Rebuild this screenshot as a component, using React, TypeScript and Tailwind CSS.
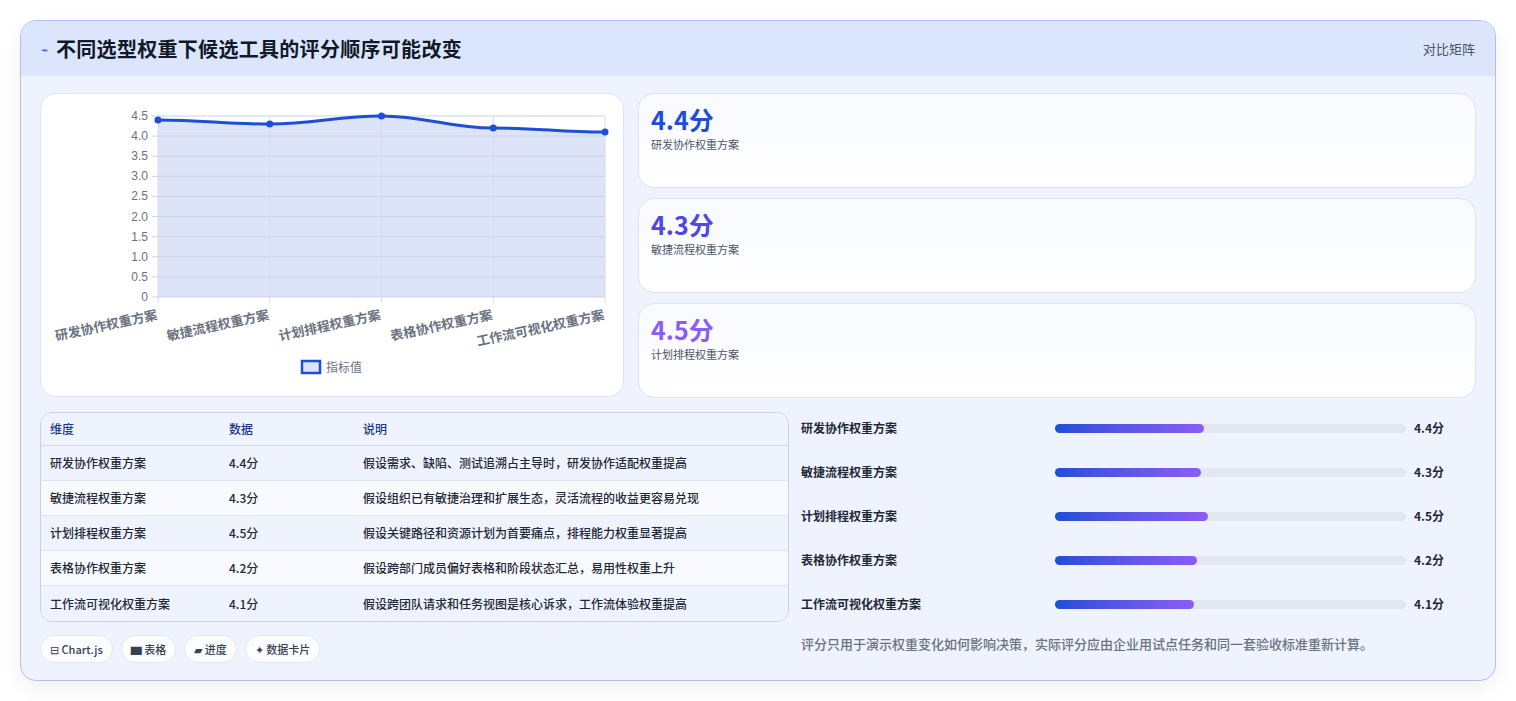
import React from "react";

const rows = [
  { name: "研发协作权重方案", v: 4.4, note: "假设需求、缺陷、测试追溯占主导时，研发协作适配权重提高" },
  { name: "敏捷流程权重方案", v: 4.3, note: "假设组织已有敏捷治理和扩展生态，灵活流程的收益更容易兑现" },
  { name: "计划排程权重方案", v: 4.5, note: "假设关键路径和资源计划为首要痛点，排程能力权重显著提高" },
  { name: "表格协作权重方案", v: 4.2, note: "假设跨部门成员偏好表格和阶段状态汇总，易用性权重上升" },
  { name: "工作流可视化权重方案", v: 4.1, note: "假设跨团队请求和任务视图是核心诉求，工作流体验权重提高" },
];

function Chart() {
  const x0 = 117, x1 = 564, yTop = 22, yBot = 203;
  const xs = rows.map((_, i) => x0 + ((x1 - x0) * i) / 4);
  const y = (v: number) => yBot - ((yBot - yTop) * v) / 4.5;
  const pts = rows.map((r, i) => [xs[i], y(r.v)] as const);
  let d = `M${pts[0][0]},${pts[0][1]}`;
  for (let i = 1; i < pts.length; i++) {
    const [px, py] = pts[i - 1];
    const [cx, cy] = pts[i];
    const dx = (cx - px) * 0.4;
    d += ` C${px + dx},${py} ${cx - dx},${cy} ${cx},${cy}`;
  }
  const ticks = [0, 0.5, 1, 1.5, 2, 2.5, 3, 3.5, 4, 4.5];
  return (
    <svg width="583" height="303" className="block" style={{ fontFamily: "'Liberation Sans', 'Noto Sans CJK SC', sans-serif" }}>
      <path d={`${d} L${x1},${yBot} L${x0},${yBot} Z`} fill="#dde4f7" />
      {ticks.map((t) => (
        <g key={t}>
          <line x1={x0 - 6} x2={x1} y1={y(t)} y2={y(t)} stroke="#c9d3ea" strokeWidth="1" />
          <text x={x0 - 10} y={y(t) + 4} textAnchor="end" fontSize="12" fill="#6b7280">{t === 0 ? "0" : t.toFixed(1)}</text>
        </g>
      ))}
      {xs.map((x) => (
        <line key={x} x1={x} x2={x} y1={yTop} y2={yBot + 6} stroke="#d4dcee" strokeWidth="1" />
      ))}
      <path d={d} fill="none" stroke="#1d4ed8" strokeWidth="3" />
      {pts.map(([px, py], i) => (
        <circle key={i} cx={px} cy={py} r="3.5" fill="#1d4ed8" />
      ))}
      {rows.map((r, i) => (
        <text key={r.name} x={xs[i]} y={yBot + 22} textAnchor="end" fontSize="13" fontWeight="600" fill="#6b7280"
          transform={`rotate(-12 ${xs[i]} ${yBot + 22})`} style={{ fontFamily: "'Noto Sans CJK SC', sans-serif" }}>
          {r.name}
        </text>
      ))}
      <rect x="261" y="267" width="18" height="12" fill="#dde4f7" stroke="#1d4ed8" strokeWidth="2.5" />
      <text x="285" y="278" fontSize="12" fill="#6b7280" style={{ fontFamily: "'Noto Sans CJK SC', sans-serif" }}>指标值</text>
    </svg>
  );
}

const cards = [
  { v: "4.4分", n: "研发协作权重方案", c: "text-[#1d4ed8]" },
  { v: "4.3分", n: "敏捷流程权重方案", c: "text-[#4f46e5]" },
  { v: "4.5分", n: "计划排程权重方案", c: "text-[#8b5cf6]" },
];

export default function App() {
  return (
    <div className="min-h-[701px] bg-white px-5 pt-5" style={{ fontFamily: "'Noto Sans CJK SC', 'Noto Sans', sans-serif" }}>
      <div className="w-[1476px] h-[661px] rounded-2xl border border-[#b4c0ec] bg-[#eef3fe] overflow-hidden shadow-[0_8px_20px_rgba(0,0,0,0.06)]">
        <div className="h-[55px] bg-[#dbe6fd] flex items-center justify-between pl-5 pr-5">
          <div className="flex items-center gap-2">
            <span className="text-[12px] text-[#2563eb]">⌁</span>
            <h1 className="text-[20px] font-bold text-[#111827] tracking-[0.3px]">不同选型权重下候选工具的评分顺序可能改变</h1>
          </div>
          <span className="text-[13px] text-[#4b5563]">对比矩阵</span>
        </div>
        <div className="px-[19px] pt-[17px]">
          <div className="flex gap-[14px]">
            <div className="w-[584px] h-[304px] rounded-2xl bg-white border border-[#dde5f5]">
              <Chart />
            </div>
            <div className="flex-1 flex flex-col gap-[10px]">
              {cards.map((c) => (
                <div key={c.n} className="h-[95px] rounded-2xl border border-[#dbe3f4] bg-gradient-to-b from-[#f8faff] to-white px-3 pt-[9px]">
                  <div className={`text-[25px] font-bold leading-[32px] ${c.c}`}>{c.v}</div>
                  <div className="text-[11px] text-[#4b5563] mt-[1px]">{c.n}</div>
                </div>
              ))}
            </div>
          </div>
          <div className="flex gap-3 mt-[14px]">
            <div className="w-[749px]">
              <div className="rounded-xl border border-[#c7d2ea] overflow-hidden text-[12px] font-medium">
                <div className="flex h-[33px] items-center bg-[#eef3fe] border-b border-[#cfd8ec] text-[#1e3a8a]">
                  <div className="w-[188px] pl-[9px]">维度</div>
                  <div className="w-[134px]">数据</div>
                  <div className="flex-1">说明</div>
                </div>
                {rows.map((r, i) => (
                  <div key={r.name} className={`flex h-[35px] items-center text-[#1f2937] ${i < 4 ? "border-b border-[#dde4f2]" : ""} ${i % 2 === 0 ? "bg-[#eef3fe]" : "bg-[#f8faff]"}`}>
                    <div className="w-[188px] pl-[9px]">{r.name}</div>
                    <div className="w-[134px]">{r.v}分</div>
                    <div className="flex-1">{r.note}</div>
                  </div>
                ))}
              </div>
              <div className="flex gap-2 mt-[13px] text-[11px] text-[#374151] font-medium">
                {["⊟ Chart.js", "▆ 表格", "▰ 进度", "✦ 数据卡片"].map((t) => (
                  <span key={t} className="h-[28px] px-[9px] rounded-full bg-white/80 border border-[#e3e8f3] flex items-center">{t}</span>
                ))}
              </div>
            </div>
            <div className="flex-1 -mt-[6px]">
              <div className="flex flex-col">
                {rows.map((r) => (
                  <div key={r.name} className="h-[44px] flex items-center text-[12px] font-semibold text-[#1f2937]">
                    <div className="w-[254px]">{r.name}</div>
                    <div className="w-[351px] h-[9px] rounded-full bg-[#e2e8f0]">
                      <div className="h-full rounded-full bg-gradient-to-r from-[#1d4ed8] to-[#8b5cf6]" style={{ width: `${((r.v * 35 - 5) / 351) * 100}%` }} />
                    </div>
                    <div className="ml-2">{r.v}分</div>
                  </div>
                ))}
              </div>
              <div className="text-[13px] font-medium text-[#6b7280] mt-[8px]">评分只用于演示权重变化如何影响决策，实际评分应由企业用试点任务和同一套验收标准重新计算。</div>
            </div>
          </div>
        </div>
      </div>
    </div>
  );
}
